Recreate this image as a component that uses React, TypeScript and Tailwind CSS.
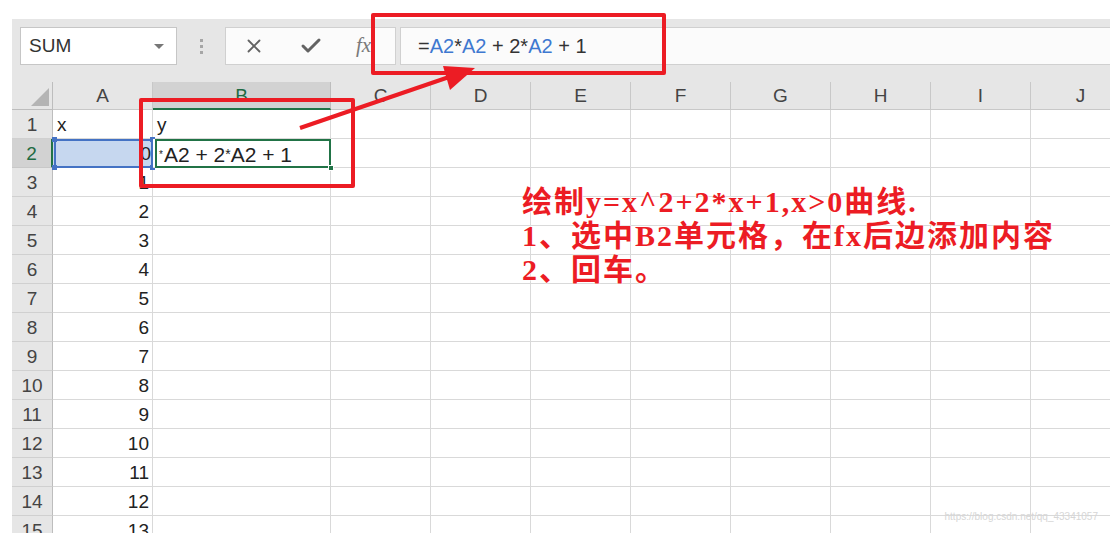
import { X, Check } from 'lucide-react';

const COLS = [
  { l: 'A', w: 100 },
  { l: 'B', w: 178 },
  { l: 'C', w: 100 },
  { l: 'D', w: 100 },
  { l: 'E', w: 100 },
  { l: 'F', w: 100 },
  { l: 'G', w: 100 },
  { l: 'H', w: 100 },
  { l: 'I', w: 100 },
  { l: 'J', w: 100 },
];

const ROWS = Array.from({ length: 15 }, (_, i) => i + 1);

function cellText(r: number, c: string) {
  if (r === 1 && c === 'A') return 'x';
  if (r === 1 && c === 'B') return 'y';
  if (c === 'A' && r >= 3) return String(r - 2);
  return '';
}

function Toolbar() {
  return (
    <div className="h-[63px] bg-[#e6e6e6] pt-2 pl-2 flex items-start">
      <div className="w-[157px] h-[38px] bg-white border border-[#c6c6c6] flex items-center justify-between pl-2 pr-3">
        <span className="text-[19px] text-[#333]">SUM</span>
        <span className="w-0 h-0 border-l-[5px] border-r-[5px] border-t-[5px] border-l-transparent border-r-transparent border-t-[#777]" />
      </div>
      <div className="w-[48px] h-[38px] flex flex-col items-center justify-center gap-[3px]">
        <span className="w-[3px] h-[3px] bg-[#a6a6a6]" />
        <span className="w-[3px] h-[3px] bg-[#a6a6a6]" />
        <span className="w-[3px] h-[3px] bg-[#a6a6a6]" />
      </div>
      <div className="w-[171px] h-[38px] bg-[#fbfbfb] border border-[#d0d0d0] flex items-center">
        <div className="w-[55px] flex justify-center">
          <X size={22} strokeWidth={2} color="#636363" />
        </div>
        <div className="w-[60px] flex justify-center">
          <Check size={24} strokeWidth={3} color="#636363" />
        </div>
        <div className="w-[45px] flex justify-center">
          <span className="text-[21px] italic text-[#7a7a7a] font-['Liberation_Serif',serif]">fx</span>
        </div>
      </div>
      <div className="ml-[4px] flex-1 h-[38px] bg-[#fbfbfb] border-y border-l border-[#d0d0d0] flex items-center pl-[17px] text-[20px] text-[#333]">
        <span>=</span>
        <span className="text-[#3e78d0]">A2</span>
        <span>*</span>
        <span className="text-[#3e78d0]">A2</span>
        <span className="whitespace-pre"> + 2*</span>
        <span className="text-[#3e78d0]">A2</span>
        <span className="whitespace-pre"> + 1</span>
      </div>
    </div>
  );
}

function Header() {
  return (
    <div className="flex h-[28px]">
      <div className="w-[41px] shrink-0 bg-[#e6e6e6] border-r border-b border-[#bdbdbd] relative">
        <svg className="absolute right-[3px] bottom-[3px]" width="18" height="18" viewBox="0 0 18 18">
          <polygon points="18,0 18,18 0,18" fill="#b4b4b4" />
        </svg>
      </div>
      {COLS.map((c) => (
        <div
          key={c.l}
          style={{ width: c.w }}
          className={
            c.l === 'B'
              ? 'shrink-0 bg-[#d2d2d2] border-r border-[#bdbdbd] border-b-2 border-b-[#217346] flex items-center justify-center pt-[2px] text-[19px] text-[#1f6b43]'
              : 'shrink-0 bg-[#e6e6e6] border-r border-b border-[#c8c8c8] flex items-center justify-center pt-[2px] text-[19px] text-[#444]'
          }
        >
          {c.l}
        </div>
      ))}
    </div>
  );
}

function Row({ r }: { r: number }) {
  const active = r === 2;
  return (
    <div className="flex h-[29px]">
      <div
        className={
          active
            ? 'w-[41px] shrink-0 bg-[#d2d2d2] border-r-2 border-r-[#217346] border-b border-[#c8c8c8] flex items-center justify-center pt-[3px] text-[19px] text-[#1f6b43]'
            : 'w-[41px] shrink-0 bg-[#e6e6e6] border-r border-r-[#bdbdbd] border-b border-[#d0d0d0] flex items-center justify-center pt-[3px] text-[19px] text-[#444]'
        }
      >
        {r}
      </div>
      {COLS.map((c) => {
        const t = cellText(r, c.l);
        const right = c.l === 'A' && r >= 2;
        if (active && c.l === 'A') {
          return (
            <div key={c.l} style={{ width: c.w }} className="shrink-0 relative bg-[#c6d7ef] border-r border-b border-[#d9d9d9] flex items-center justify-end pt-[3px] pr-[1px] text-[19px] text-[#222]">
              0
              <div className="absolute left-[1px] top-0 right-[-1px] bottom-[-1px] border-2 border-[#4472c4]" />
              <span className="absolute left-[-1px] top-[-2px] w-[5px] h-[5px] bg-[#4472c4]" />
              <span className="absolute left-[-1px] bottom-[-3px] w-[5px] h-[5px] bg-[#4472c4]" />
              <span className="absolute right-[-3px] top-[-2px] w-[5px] h-[5px] bg-[#4472c4]" />
              <span className="absolute right-[-3px] bottom-[-3px] w-[5px] h-[5px] bg-[#4472c4]" />
            </div>
          );
        }
        if (active && c.l === 'B') {
          return (
            <div key={c.l} style={{ width: c.w }} className="shrink-0 relative bg-white border-r border-b border-[#d9d9d9] flex items-center pt-[3px] pl-[6px] text-[21px] text-[#222] whitespace-pre overflow-visible">
              <span className="text-[10px] mr-[1px]">*</span>A2 + 2<span className="text-[14px]">*</span>A2 + 1
              <div className="absolute left-[2px] top-0 right-[-1px] bottom-[-1px] border-2 border-[#217346]" />
              <span className="absolute right-[-4px] bottom-[-4px] w-[6px] h-[6px] bg-[#217346] border border-white" />
            </div>
          );
        }
        return (
          <div
            key={c.l}
            style={{ width: c.w }}
            className={
              right
                ? 'shrink-0 border-r border-b border-[#d9d9d9] flex items-center justify-end pt-[3px] pr-[3px] text-[19px] text-[#222]'
                : 'shrink-0 border-r border-b border-[#d9d9d9] flex items-center pt-[3px] pl-[4px] text-[19px] text-[#222]'
            }
          >
            {t}
          </div>
        );
      })}
    </div>
  );
}

export default function App() {
  return (
    <div className="w-[1110px] h-[533px] bg-white relative overflow-hidden font-['Liberation_Sans',Arial,sans-serif]">
      <div className="pt-[19px] pl-[12px]">
        <Toolbar />
        <Header />
        {ROWS.map((r) => (
          <Row key={r} r={r} />
        ))}
      </div>

      <div className="absolute left-[522px] top-[185px] text-[30px] leading-[34px] tracking-[2px] font-bold text-[#ec1c24] font-['Liberation_Serif','Noto_Sans_CJK_SC',serif] [text-shadow:0_0_2px_#fff,0_0_2px_#fff] whitespace-pre">
        <div>绘制y=x^2+2*x+1,x&gt;0曲线.</div>
        <div>1、选中B2单元格，在fx后边添加内容</div>
        <div>2、回车。</div>
      </div>

      <div className="absolute right-[12px] bottom-[9px] text-[10px] text-[#d6d6d6]">https://blog.csdn.net/qq_43341057</div>

      <div className="absolute left-[371px] top-[13px] w-[295px] h-[62px] border-4 border-[#ec1c24] rounded-[2px]" />
      <div className="absolute left-[139px] top-[98px] w-[216px] h-[90px] border-4 border-[#ec1c24] rounded-[2px]" />
      <svg className="absolute left-0 top-0 pointer-events-none" width="1110" height="533">
        <line x1="300" y1="128" x2="452" y2="76" stroke="#ec1c24" strokeWidth="4" />
        <polygon points="475,68 443,66 450,90" fill="#ec1c24" />
      </svg>
    </div>
  );
}
